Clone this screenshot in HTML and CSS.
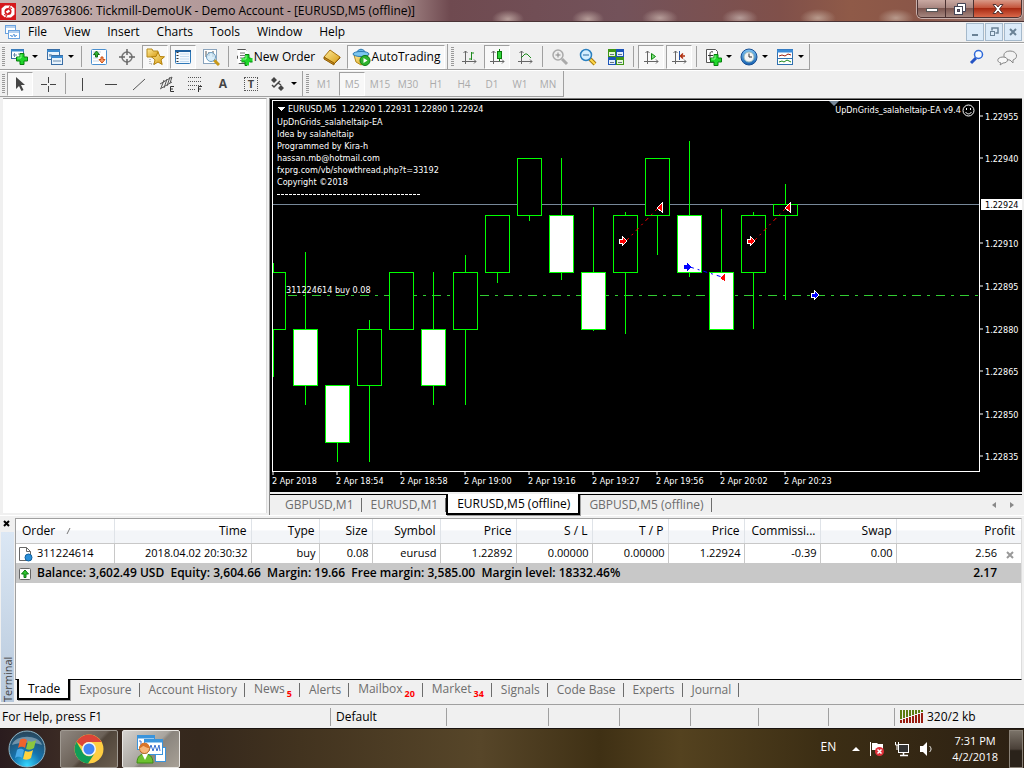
FILE: index.html
```html
<!DOCTYPE html>
<html lang="en">
<head>
    <meta charset="UTF-8">
    <meta name="viewport" content="width=device-width, initial-scale=1.0">
    <title>2089763806: Tickmill-DemoUK - Demo Account - [EURUSD,M5 (offline)]</title>
    <link rel="stylesheet" href="styles.css">
</head>
<body>

<!-- shared icon parts -->
<svg class="defs" aria-hidden="true">
    <defs>
        <linearGradient id="gold" x1="0" y1="0" x2="1" y2="1"><stop offset="0" stop-color="#ffec9a"/><stop offset="1" stop-color="#d69a10"/></linearGradient>
        <linearGradient id="blue" x1="0" y1="0" x2="0" y2="1"><stop offset="0" stop-color="#7fc4f5"/><stop offset="1" stop-color="#1560b0"/></linearGradient>
        <radialGradient id="orb" cx=".5" cy=".95" r=".9"><stop offset="0" stop-color="#35d8ff"/><stop offset=".45" stop-color="#1573ae"/><stop offset="1" stop-color="#28485e"/></radialGradient>
        <symbol id="plus" viewBox="0 0 12 12"><path d="M4 .5h4V4h3.500v4H8v3.500H4V8H.5V4H4z" fill="#1fd62a" stroke="#07800e"/><path d="M5 1.500v3.500H1.500" fill="none" stroke="#8dff8d"/></symbol>
        <symbol id="axes" viewBox="0 0 18 18"><path d="M5.500 3v13M2 13.500h14M3.500 5l2-2 2 2M14 11.500l2 2-2 2" fill="none" stroke="#666"/></symbol>
        <symbol id="lens" viewBox="0 0 18 18"><path d="M11 11l5 5" stroke="#a87a10" stroke-width="4"/><path d="M11 11l5 5" stroke="#ffd84a" stroke-width="2"/><circle cx="7" cy="7" r="5.500" fill="#d4efff" stroke="#2b80c0" stroke-width="1.500"/></symbol>
    </defs>
</svg>

<header class="titlebar">
    <svg class="app-logo" width="16" height="17" viewBox="0 0 16 17"><rect width="16" height="17" fill="#d5181c"/><path d="M5 2.500h6l3.500 3v6l-3.500 3H5l-3.500-3v-6z" fill="#fff"/><circle cx="8" cy="8.500" r="3.500" fill="#d5181c"/><path d="M6.500 9.500l3-2" stroke="#fff" stroke-width="2.500"/><path d="M11 2l-2 2.500 3 1M5 15l2-2.500-3-1" fill="none" stroke="#d5181c"/></svg>
    <h1 class="title">2089763806: Tickmill-DemoUK - Demo Account - [EURUSD,M5 (offline)]</h1>
    <div class="win-buttons">
        <button class="win-btn" aria-label="Minimize"><svg width="12" height="12"><rect x=".5" y="5.500" width="11" height="3" fill="#fff" stroke="#555"/></svg></button>
        <button class="win-btn" aria-label="Restore"><svg width="12" height="12"><path d="M3.500 3.500v-3h8v8h-3" fill="#fff" stroke="#445"/><rect x=".5" y="3.500" width="8" height="8" fill="#fff" stroke="#445"/><rect x="3.500" y="6.500" width="2" height="2" fill="#867" stroke="#445"/></svg></button>
        <button class="win-btn win-close" aria-label="Close"><svg width="12" height="12"><path d="M1 1.500h3l2 2.500 2-2.500h3L7.500 6l3.500 4.500H8L6 8l-2 2.500H1L4.500 6z" fill="#fff" stroke="#533"/></svg></button>
    </div>
</header>

<nav class="menubar">
    <svg width="15" height="15" viewBox="0 0 15 15"><g fill="#fff" stroke="#6aa2de"><rect x=".5" y=".5" width="10" height="8"/><path d="M1 2h9" /><rect x="3.500" y="5.500" width="11" height="8"/><path d="M4 7h10"/><path d="M5 11l1-1 1 2 2-3 1 3 1-2 1 1" fill="none"/></g></svg>
    <a href="#">File</a>
    <a href="#">View</a>
    <a href="#">Insert</a>
    <a href="#">Charts</a>
    <a href="#">Tools</a>
    <a href="#">Window</a>
    <a href="#">Help</a>
    <div class="mdi-buttons">
        <button class="mdi-btn" aria-label="Minimize chart"><svg width="10" height="10"><path d="M2 8h6" stroke="#6a8296" stroke-width="2"/></svg></button>
        <button class="mdi-btn" aria-label="Restore chart"><svg width="10" height="10"><path d="M3 3.500V1h6v5H6.500" fill="none" stroke="#6a8296" stroke-width="1.500"/><rect x="1.500" y="4.500" width="4" height="4" fill="none" stroke="#6a8296"/></svg></button>
        <button class="mdi-btn" aria-label="Close chart"><svg width="10" height="10"><path d="M2 2l6 6M8 2L2 8" stroke="#6a8296" stroke-width="2"/></svg></button>
    </div>
</nav>

<div class="toolbar">
    <div class="band">
        <span class="grip"></span>
        <button class="tool split" aria-label="New chart"><svg width="18" height="18"><rect x="1.500" y="1.500" width="12" height="9" fill="#fff" stroke="#3a6ea5"/><path d="M1 2.500h13" stroke="#3a8ad0" stroke-width="2"/><path d="M4.500 5v4M3 7h4M8 6h4" stroke="#6b8cae"/><use href="#plus" x="6" y="5" width="12" height="12"/></svg><i class="arrow"></i></button>
        <button class="tool split" aria-label="Profiles"><svg width="18" height="18"><g fill="#e8f3fc" stroke="#3a6ea5"><rect x="1.500" y="1.500" width="12" height="10"/><path d="M1 3h13" stroke="#3a8ad0" stroke-width="2"/><rect x="5.500" y="7.500" width="11" height="9"/><path d="M5 9h12" stroke="#3a8ad0" stroke-width="2"/></g><path d="M4 6v3M3 7h3M7 13h8" stroke="#6b8cae"/></svg><i class="arrow"></i></button>
        <span class="sep"></span>
        <button class="tool" aria-label="Market Watch"><svg width="18" height="18"><rect x="1.500" y="1.500" width="15" height="15" rx="1" fill="#fff" stroke="#4a90d0"/><path d="M3 4h8M3 7h5M3 10h5M3 13h6" stroke="#c5d5e5"/><path d="M6.500 3l3 3.500h-2V9h-2V6.500h-2z" fill="#2fb32f" stroke="#167016"/><path d="M12 15l-3-3.500h2V9h2v2.500h2z" fill="#f8a070" stroke="#d05010"/></svg></button>
        <button class="tool" aria-label="Data Window"><svg width="18" height="18"><circle cx="9" cy="9" r="5" fill="none" stroke="#777" stroke-width="1.500"/><path d="M9 1v6M9 11v6M1 9h6M11 9h6" stroke="#666" stroke-width="1.500"/></svg></button>
        <button class="tool active" aria-label="Navigator"><svg width="20" height="20"><path d="M2 4V2h5l1 2h5v6H2z" fill="url(#gold)" stroke="#b58a1a"/><path d="M5 12v6M6 17h4" stroke="#888" stroke-dasharray="1 1"/><path d="M13 5l2 4.500 4.500.3-3.500 3 1.200 4.700-4.200-2.500L9 17.500l1-4.700-3.500-3 4.500-.3z" fill="url(#gold)" stroke="#b5820a"/></svg></button>
        <button class="tool active" aria-label="Terminal"><svg width="18" height="18"><rect x="1.500" y="2.500" width="15" height="13" rx="1" fill="#f2f8fd" stroke="#2f78b8"/><path d="M1 3h16" stroke="#1d5f9e" stroke-width="2"/><path d="M3.500 4v11" stroke="#333" stroke-width="2" stroke-dasharray="1 2"/><path d="M6 6h9M6 8.500h9M6 11h9M6 13.500h9" stroke="#c4dbef"/></svg></button>
        <button class="tool" aria-label="Strategy Tester"><svg width="18" height="18"><rect x="1.500" y="1.500" width="13" height="14" fill="#fff" stroke="#8aa4bd"/><path d="M4 3v6M7 4v4M11 3v6" stroke="#555"/><path d="M12 12l5 5" stroke="#c89818" stroke-width="3"/><circle cx="9" cy="9" r="4.500" fill="#cfe8f8" fill-opacity=".8" stroke="#6a9cc0"/></svg></button>
        <span class="sep"></span>
        <button class="tool order"><svg width="18" height="18"><path d="M2.500 1.500h8l3 3v11h-11z" fill="#fff" stroke="#555"/><path d="M5 5h5M5 7.500h6M5 10h4M5 12.500h3" stroke="#777"/><use href="#plus" x="6" y="6" width="12" height="12"/></svg>New Order</button>
        <button class="tool" aria-label="MetaEditor"><svg width="18" height="18"><path d="M1 9l6-7 10 7-6 7z" fill="url(#gold)" stroke="#a8720c"/><path d="M1 9v2l10 6v-2zM11 16l6-6V9" fill="#c68a18" stroke="#8f5f08"/></svg></button>
        <button class="tool auto active"><svg width="19" height="18"><path d="M2 7h14l-2 7-5 3-5-3z" fill="url(#gold)" stroke="#b58a1a"/><path d="M5 5c0-5 8-5 8 0" fill="#6ab8e8" stroke="#2a78b0"/><ellipse cx="9" cy="6" rx="8" ry="2.500" fill="#7cc6ef" stroke="#2a78b0"/><circle cx="13" cy="12.500" r="5" fill="#2fb32f" stroke="#0b7a14"/><path d="M11.500 10l4 2.500-4 2.500z" fill="#fff"/></svg>AutoTrading</button>
    </div>
    <div class="band">
        <span class="grip"></span>
        <button class="tool" aria-label="Bar chart"><svg width="18" height="18"><use href="#axes" width="18" height="18"/><path d="M11.500 4v8M9 11h2.500M11.500 5H14" stroke="#1c8a1c"/></svg></button>
        <button class="tool active" aria-label="Candlesticks"><svg width="18" height="18"><use href="#axes" width="18" height="18"/><path d="M11.500 1v12" stroke="#0a7a0a"/><rect x="9.500" y="3.500" width="4" height="7" fill="#2fd23a" stroke="#0a7a0a"/></svg></button>
        <button class="tool" aria-label="Line chart"><svg width="18" height="18"><use href="#axes" width="18" height="18"/><path d="M5 10l4-4h2l4 4" fill="none" stroke="#1c8a1c"/></svg></button>
        <span class="sep"></span>
        <button class="tool" aria-label="Zoom In"><svg width="18" height="18"><path d="M11 11l5 5" stroke="#aaa" stroke-width="3"/><circle cx="7" cy="7" r="5" fill="#eee" stroke="#aaa" stroke-width="1.500"/><path d="M4.500 7h5M7 4.500v5" stroke="#888"/></svg></button>
        <button class="tool" aria-label="Zoom Out"><svg width="18" height="18"><use href="#lens" width="18" height="18"/><path d="M4 7h6" stroke="#2b6aa0"/></svg></button>
        <button class="tool" aria-label="Tile Windows"><svg width="18" height="18"><g stroke-width="1"><rect x="1.500" y="1.500" width="7" height="7" fill="#e8f8dc" stroke="#3f9616"/><rect x="9.500" y="1.500" width="7" height="7" fill="#e3eefc" stroke="#1c54b8"/><rect x="1.500" y="9.500" width="7" height="7" fill="#e3eefc" stroke="#1c54b8"/><rect x="9.500" y="9.500" width="7" height="7" fill="#e8f8dc" stroke="#3f9616"/></g><path d="M1 2.500h8M9 10.500h8" stroke="#3f9616" stroke-width="3"/><path d="M9 2.500h8M1 10.500h8" stroke="#1c54b8" stroke-width="3"/><path d="M3 6.500h4M11 6.500h4M3 14.500h4M11 14.500h4" stroke="#678"/></svg></button>
        <span class="sep"></span>
        <button class="tool active" aria-label="Auto Scroll"><svg width="18" height="18"><use href="#axes" width="18" height="18"/><path d="M9.500 5.500l4 3-4 3z" fill="#7fe07f" stroke="#0f8a0f"/></svg></button>
        <button class="tool active" aria-label="Chart Shift"><svg width="18" height="18"><use href="#axes" width="18" height="18"/><path d="M9.500 3v9" stroke="#2255aa"/><path d="M15 8h-4M13 5.500L10.500 8l2.500 2.500" stroke="#b03010" fill="none" stroke-width="1.500"/></svg></button>
        <span class="sep"></span>
        <button class="tool split" aria-label="Indicators"><svg width="18" height="18"><path d="M2.500 1.500h9l2 2v11h-11z" fill="#fff" stroke="#555"/><path d="M9 4c-3-1-3 1-3 3v5M4 7.500h5" fill="none" stroke="#333"/><use href="#plus" x="6" y="6" width="12" height="12"/></svg><i class="arrow"></i></button>
        <button class="tool split" aria-label="Periods"><svg width="18" height="18"><circle cx="9" cy="9" r="8" fill="url(#blue)" stroke="#174f94"/><circle cx="9" cy="9" r="5" fill="#f5f5f5" stroke="#9bb"/><path d="M9 5.500V9h3" fill="none" stroke="#333"/></svg><i class="arrow"></i></button>
        <button class="tool split" aria-label="Templates"><svg width="18" height="18"><rect x="1.500" y="1.500" width="15" height="15" fill="#fff" stroke="#2f6faf"/><path d="M1 3h16" stroke="#3b8bd8" stroke-width="3"/><path d="M2 10.500h14" stroke="#2f6faf"/><path d="M3 8l3-1 3 1 3-2 3 1" fill="none" stroke="#a02010"/><path d="M3 14l3-1 2 1 3-2 4 2" fill="none" stroke="#1c8a1c"/></svg><i class="arrow"></i></button>
    </div>
    <div class="corner">
        <button class="tool" aria-label="Search"><svg width="18" height="18"><path d="M3 15l5-5" stroke="#2453c4" stroke-width="3"/><circle cx="10.500" cy="6.500" r="4" fill="#f4f9ff" stroke="#2d68d8" stroke-width="1.500"/></svg></button>
        <button class="tool" aria-label="Community"><svg width="22" height="18"><path d="M14 12l3 3v-3c6-2 4-9-3-9-8 0-8 8-1 9z" fill="#f2f2f2" stroke="#888"/><path d="M5 15l-1 2 3-2c6 0 6-6 0-6s-7 5-2 6z" fill="#f8f8f8" stroke="#888"/></svg></button>
    </div>
</div>

<div class="toolbar">
    <div class="band">
        <span class="grip"></span>
        <button class="tool active" aria-label="Cursor"><svg width="18" height="18"><path d="M5 2v12l3-3 2.500 5 2-1L10 10h4z" fill="#444"/></svg></button>
        <button class="tool" aria-label="Crosshair"><svg width="18" height="18"><path d="M9.500 2v6M9.500 11v6M2 9.500h6M11 9.500h6" stroke="#444"/></svg></button>
        <span class="sep"></span>
        <button class="tool" aria-label="Vertical line"><svg width="18" height="18"><path d="M8.500 3v13" stroke="#444"/></svg></button>
        <button class="tool" aria-label="Horizontal line"><svg width="18" height="18"><path d="M3 9.500h12" stroke="#444"/></svg></button>
        <button class="tool" aria-label="Trendline"><svg width="18" height="18"><path d="M3 15L15 4" stroke="#555"/></svg></button>
        <button class="tool" aria-label="Equidistant channel"><svg width="18" height="18"><path d="M2 9l12-7M2 14l12-7M3 13l3-8M6 13l3-9M9 11l3-9M12 8l2-6" stroke="#555"/><path d="M16 11.500h-3.500v5H16M12.500 14H15" fill="none" stroke="#333"/></svg></button>
        <button class="tool" aria-label="Fibonacci"><svg width="18" height="18"><path d="M2 2.500h13M2 6.500h13M2 10.500h13M2 14.500h8" stroke="#555" stroke-dasharray="1 1"/><path d="M16 11.500h-3.500V17M12.500 14H15" fill="none" stroke="#333"/></svg></button>
        <button class="tool glyph" aria-label="Text">A</button>
        <button class="tool glyph" aria-label="Text label"><span class="boxed">T</span></button>
        <button class="tool split" aria-label="Arrows"><svg width="18" height="18"><path d="M2 5l3-3 3 3-3 3zM9 13l3-3 3 3-3 3z" fill="#444"/><path d="M3 10l2 2 6-6M9 8l3 2" fill="none" stroke="#444" stroke-width="1.500"/></svg><i class="arrow"></i></button>
    </div>
    <div class="band periods">
        <span class="grip"></span>
        <button class="tool">M1</button>
        <button class="tool active">M5</button>
        <button class="tool">M15</button>
        <button class="tool">M30</button>
        <button class="tool">H1</button>
        <button class="tool">H4</button>
        <button class="tool">D1</button>
        <button class="tool">W1</button>
        <button class="tool">MN</button>
    </div>
</div>

<main class="workspace">
    <aside class="side-panel"></aside>
    <section class="chart-window">
        <div class="chart">
            <div class="plot">
                <svg class="plot-svg" width="100%" height="370">
                    <line class="bid" x1="0" y1="103" x2="100%" y2="103"/>
                    <line class="order" x1="15" y1="194" x2="100%" y2="194"/>
                    <g class="candles">
                        <path d="M0 162v114M32 151v153M64 285v76M96 219v142M160 171v133M192 154v150M224 172v10M256 115v5M288 57v122M320 106v124M352 111v122M384 115v39M416 40v136M448 108v121M480 111v117M512 83v116"/>
                        <rect x="-12" y="171" width="24" height="57"/>
                        <rect class="down" x="20" y="228" width="24" height="56"/>
                        <rect class="down" x="52" y="284" width="24" height="57"/>
                        <rect x="84" y="228" width="24" height="56"/>
                        <rect x="116" y="171" width="24" height="57"/>
                        <rect class="down" x="148" y="228" width="24" height="56"/>
                        <rect x="180" y="171" width="24" height="57"/>
                        <rect x="212" y="114" width="24" height="57"/>
                        <rect x="244" y="57" width="24" height="57"/>
                        <rect class="down" x="276" y="114" width="24" height="57"/>
                        <rect class="down" x="308" y="171" width="24" height="57"/>
                        <rect x="340" y="114" width="24" height="57"/>
                        <rect x="372" y="57" width="24" height="57"/>
                        <rect class="down" x="404" y="114" width="24" height="57"/>
                        <rect class="down" x="436" y="171" width="24" height="57"/>
                        <rect x="468" y="114" width="24" height="57"/>
                        <rect x="500" y="103" width="24" height="11"/>
                    </g>
                    <g class="trades">
                        <path d="M353 140L385 107M481 140L513 107" stroke="#f00"/>
                        <path d="M417 166L449 176" stroke="#00f"/>
                    </g>
                    <g stroke="#fff">
                        <path d="M346 138h3v-3l5 5-5 5v-3h-3zM474 138h3v-3l5 5-5 5v-3h-3z" fill="#f00"/>
                        <path d="M389 102v9l-5-4zM517 102v9l-5-4z" fill="#f00"/>
                        <path d="M538 192h3v-3l5 5-5 5v-3h-3z" fill="#00f"/>
                    </g>
                    <path d="M411 164h3v-2l5 4-5 4v-2h-3z" fill="#00f"/>
                    <path d="M452 173v7l-5-3z" fill="#f00"/>
                    <path d="M4 6h8l-4 4z" fill="#fff"/>
                    <g class="chart-text">
                        <text x="15" y="11">EURUSD,M5&#160; 1.22920 1.22931 1.22890 1.22924</text>
                        <text x="4" y="24">UpDnGrids_salaheltaip-EA</text>
                        <text x="4" y="36">Idea by salaheltaip</text>
                        <text x="4" y="48">Programmed by Kira-h</text>
                        <text x="4" y="60">hassan.mb@hotmail.com</text>
                        <text x="4" y="72">fxprg.com/vb/showthread.php?t=33192</text>
                        <text x="4" y="84">Copyright ©2018</text>
                        <text x="13" y="192">311224614 buy 0.08</text>
                    </g>
                    <path d="M4 93h144" stroke="#fff" stroke-dasharray="3 1"/>
                </svg>
                <div class="expert"><i class="shift-mark"></i>UpDnGrids_salaheltaip-EA v9.4<svg width="13" height="13"><circle cx="6.500" cy="6.500" r="5.500" fill="none" stroke="#fff"/><path d="M4.500 4v2M8.500 4v2M3.500 8c1.500 2.500 4.500 2.500 6 0" stroke="#fff" fill="none"/></svg></div>
            </div>
            <svg class="price-axis chart-text" width="42" height="372">
                <path d="M0 16h3M0 58h3M0 143h3M0 186h3M0 229h3M0 271h3M0 314h3M0 356h3" stroke="#fff"/>
                <rect x="1" y="99" width="41" height="11" fill="#fff"/>
                <text x="5" y="20">1.22955</text>
                <text x="5" y="62">1.22940</text>
                <text class="now" x="5" y="108">1.22924</text>
                <text x="5" y="147">1.22910</text>
                <text x="5" y="190">1.22895</text>
                <text x="5" y="233">1.22880</text>
                <text x="5" y="275">1.22865</text>
                <text x="5" y="318">1.22850</text>
                <text x="5" y="360">1.22835</text>
            </svg>
            <svg class="time-axis chart-text" width="100%" height="19">
                <path d="M1 0v3M65 0v3M129 0v3M193 0v3M257 0v3M321 0v3M385 0v3M449 0v3M513 0v3" stroke="#fff"/>
                <text x="0" y="12">2 Apr 2018</text>
                <text x="64" y="12">2 Apr 18:54</text>
                <text x="128" y="12">2 Apr 18:58</text>
                <text x="192" y="12">2 Apr 19:00</text>
                <text x="256" y="12">2 Apr 19:16</text>
                <text x="320" y="12">2 Apr 19:27</text>
                <text x="384" y="12">2 Apr 19:56</text>
                <text x="448" y="12">2 Apr 20:02</text>
                <text x="512" y="12">2 Apr 20:23</text>
            </svg>
        </div>
        <div class="tabs chart-tabs">
            <button class="tab">GBPUSD,M1</button>
            <button class="tab">EURUSD,M1</button>
            <button class="tab current">EURUSD,M5 (offline)</button>
            <button class="tab">GBPUSD,M5 (offline)</button>
            <div class="tab-scroll">
                <button aria-label="Scroll left"><svg width="6" height="8"><path d="M5 1v6L1 4z" fill="#888"/></svg></button>
                <button aria-label="Scroll right"><svg width="6" height="8"><path d="M1 1v6l4-3z" fill="#888"/></svg></button>
            </div>
        </div>
    </section>
</main>

<section class="terminal">
    <div class="terminal-side">
        <button class="side-close" aria-label="Close terminal"><svg width="8" height="8"><path d="M1 1l5 5M6 1L1 6" stroke="#000" stroke-width="2"/></svg></button>
        <div class="side-title">Terminal</div>
    </div>
    <div class="terminal-main">
        <div class="trades-list">
            <table class="orders">
                <colgroup>
                    <col class="c-order"><col class="c-time"><col class="c-type"><col class="c-size"><col class="c-symbol">
                    <col class="c-num"><col class="c-num"><col class="c-num"><col class="c-num"><col class="c-num"><col class="c-num"><col>
                </colgroup>
                <thead>
                    <tr>
                        <th class="first">Order <svg class="sort" width="10" height="8"><path d="M1 7L4 1" stroke="#777"/></svg></th>
                        <th>Time</th>
                        <th>Type</th>
                        <th>Size</th>
                        <th>Symbol</th>
                        <th>Price</th>
                        <th>S / L</th>
                        <th>T / P</th>
                        <th>Price</th>
                        <th>Commissi...</th>
                        <th>Swap</th>
                        <th>Profit</th>
                    </tr>
                </thead>
                <tbody>
                    <tr>
                        <td class="first"><svg class="row-icon" width="15" height="16"><path d="M1.500 1.500h7l4 4v9h-11z" fill="#fff" stroke="#666"/><path d="M8.500 1.500v4h4" fill="none" stroke="#666"/><circle cx="10.500" cy="11.500" r="3.500" fill="#2a8fd8" stroke="#0f5f9e"/></svg>311224614</td>
                        <td>2018.04.02 20:30:32</td>
                        <td>buy</td>
                        <td>0.08</td>
                        <td>eurusd</td>
                        <td>1.22892</td>
                        <td>0.00000</td>
                        <td>0.00000</td>
                        <td>1.22924</td>
                        <td>-0.39</td>
                        <td>0.00</td>
                        <td class="profit">2.56<button class="close-order" aria-label="Close order"><svg width="8" height="8"><path d="M1 1l6 6M7 1L1 7" stroke="#999" stroke-width="2"/></svg></button></td>
                    </tr>
                    <tr class="balance">
                        <td class="first" colspan="11"><svg class="row-icon" width="15" height="14"><rect x="1.500" y="1.500" width="11" height="11" rx="1" fill="#fff" stroke="#666"/><path d="M7 3l3.500 4H8v3.500H6V7H3.500z" fill="#2fc42f" stroke="#0b7a14"/></svg>Balance: 3,602.49 USD&#160; Equity: 3,604.66&#160; Margin: 19.66&#160; Free margin: 3,585.00&#160; Margin level: 18332.46%</td>
                        <td class="profit">2.17</td>
                    </tr>
                </tbody>
            </table>
        </div>
        <div class="tabs terminal-tabs">
            <button class="tab current">Trade</button>
            <button class="tab">Exposure</button>
            <button class="tab">Account History</button>
            <button class="tab">News<span class="count">5</span></button>
            <button class="tab">Alerts</button>
            <button class="tab">Mailbox<span class="count">20</span></button>
            <button class="tab">Market<span class="count">34</span></button>
            <button class="tab">Signals</button>
            <button class="tab">Code Base</button>
            <button class="tab">Experts</button>
            <button class="tab">Journal</button>
        </div>
    </div>
</section>

<footer class="statusbar">
    <span class="help">For Help, press F1</span>
    <span>Default</span>
    <span></span>
    <span></span>
    <span></span>
    <span></span>
    <span></span>
    <span></span>
    <span class="traffic"><svg width="24" height="14"><path d="M1 0v9M4 0v8M7 0v7M10 0v6M13 0v5M16 0v4M19 0v3M22 0v2" stroke="#5b7a10" stroke-width="2"/><path d="M1 10v3M4 9v4M7 8v5M10 7v6M13 6v7M16 5v8M19 4v9M22 3v10" stroke="#9a1c10" stroke-width="2"/></svg>320/2 kb</span>
</footer>

<div class="taskbar">
    <button class="start" aria-label="Start"><svg width="38" height="38"><circle cx="19" cy="19" r="18" fill="url(#orb)" stroke="#8fb7c9"/><path d="M4 15C7 4 31 4 34 15c-8-3-22-3-30 0z" fill="#fff" opacity=".35"/><path d="M12 10c3-2 5-1 7 0l-2 8c-3-2-5-1-7 0z" fill="#f0622c"/><path d="M20 11c3 1 5 1 8-1l-2 8c-3 2-5 2-8 1z" fill="#8cc63e"/><path d="M9 20c3-2 5-1 7 0l-2 8c-3-2-5-1-7 0z" fill="#48a9e8"/><path d="M17 21c3 1 5 1 8-1l-2 8c-3 2-5 2-8 1z" fill="#ffd23e"/></svg></button>
    <button class="task" aria-label="Google Chrome"><svg width="30" height="30"><circle cx="15" cy="15" r="14.500" fill="#ffce42"/><path d="M2.500 7.700A14.500 14.500 0 0 1 27.600 8H15a7 7 0 0 0-6.500 4.500z" fill="#dc4437"/><path d="M2.500 7.700A14.500 14.500 0 0 0 14 29.500L20.500 19.500a7 7 0 0 1-12-1.500z" fill="#109d58"/><circle cx="15" cy="15" r="7" fill="#f5f5f5"/><circle cx="15" cy="15" r="5.500" fill="#4385f4"/></svg></button>
    <button class="task open" aria-label="MetaTrader"><svg width="32" height="32"><g fill="#fff" stroke="#3a94dc"><rect x="2.500" y="2.500" width="17" height="14"/><path d="M2 4h18" stroke-width="3"/><rect x="20.500" y="14.500" width="10" height="14"/><rect x="9.500" y="6.500" width="18" height="15"/><path d="M9 8h19" stroke-width="3"/></g><path d="M4 8h2v5M14 18l2-6 2 6 2-6 2 6 2-6 1 6" fill="none" stroke="#3a70d0"/><path d="M2 30c0-7 4-9 8-9s8 2 8 9z" fill="#6cc030" stroke="#3f8d12"/><path d="M7 21l3 6 3-6z" fill="#fff"/><circle cx="9.500" cy="15.500" r="5" fill="#f6b67a" stroke="#c06a20"/><path d="M4.500 15c0-7 10-7 10 0-4 0-5-2-6-2s-2 2-4 2z" fill="#d8742a"/></svg></button>
    <div class="tray">
        <span class="lang">EN</span>
        <button aria-label="Show hidden icons"><svg width="8" height="6"><path d="M0 5l4-4 4 4z" fill="#fff"/></svg></button>
        <button aria-label="Action Center"><svg width="16" height="16"><path d="M1.500 1v14" stroke="#fff"/><path d="M3 2h5l1 1h5v6H3z" fill="#fff"/><circle cx="10.500" cy="10.500" r="4.500" fill="#e0303a"/><path d="M8.500 8.500l4 4M12.500 8.500l-4 4" stroke="#fff" stroke-width="1.500"/></svg></button>
        <button aria-label="Network"><svg width="16" height="16"><rect x="4.500" y="3.500" width="10" height="8" fill="#333" stroke="#fff"/><path d="M6 14.500h8M9.500 12v2" stroke="#fff" stroke-width="1.500"/><path d="M1.500 1v3h3V1M3 4v5" stroke="#fff" fill="none"/></svg></button>
        <button aria-label="Volume"><svg width="14" height="16"><path d="M1 5h3l4-4v14l-4-4H1z" fill="#fff"/><path d="M10.500 5c2 2 2 4 0 6" stroke="#fff" fill="none"/></svg></button>
        <div class="clock"><span>7:31 PM</span><span>4/2/2018</span></div>
        <button class="show-desktop" aria-label="Show desktop"></button>
    </div>
</div>

</body>
</html>
```
FILE: styles.css
```css
* {
    box-sizing: border-box;
}
body {
    margin: 0;
    background: #fff;
    color: #000;
    font-family: "Open Sans", "Noto Sans", sans-serif;
    font-size: 12px;
    line-height: 16px;
}
button {
    margin: 0;
    padding: 0;
    border: 0;
    background: none;
    color: inherit;
    font: inherit;
}
svg {
    display: block;
    flex: none;
}
.defs {
    position: absolute;
    width: 0;
    height: 0;
}

/* title bar */
.titlebar {
    display: flex;
    height: 22px;
    border-bottom: 1px solid #4a3335;
    background:
        radial-gradient(ellipse 16px 9px at 508px 19px, #b59c98, transparent),
        radial-gradient(ellipse 16px 9px at 588px 19px, #b59c98, transparent),
        radial-gradient(ellipse 18px 9px at 660px 18px, #b59c98, transparent),
        radial-gradient(ellipse 18px 9px at 740px 18px, #b59c98, transparent),
        radial-gradient(ellipse 18px 9px at 818px 18px, #b89a8c, transparent),
        radial-gradient(ellipse 18px 9px at 896px 18px, #b89a8c, transparent),
        linear-gradient(to right, #c9b4b2 0, #b39a9a 200px, #a58888 400px, #6f4a50 450px, #73525a 620px, #80504a 780px, #8f5a48 850px, #8a5648 920px, #a08078 100%);
}
.app-logo {
    margin-top: 3px;
}
.title {
    flex: 1;
    margin: 0;
    padding: 3px 5px;
    font-size: 12px;
    font-weight: normal;
    line-height: 16px;
}
.win-buttons {
    display: flex;
    height: 18px;
    margin-right: 2px;
    border: 1px solid #4b3232;
    border-top: 0;
    border-radius: 0 0 5px 5px;
    overflow: hidden;
    box-shadow: 0 0 0 1px #c8b0ac;
}
.win-btn {
    display: flex;
    width: 28px;
    align-items: center;
    justify-content: center;
    border-right: 1px solid #4b3232;
    background: linear-gradient(#c9a9a2 0, #a98680 45%, #7c5650 50%, #a5877f 100%);
}
.win-close {
    width: 47px;
    border-right: 0;
    background: linear-gradient(#d99a88 0, #c4553c 45%, #a82a12 50%, #d9684a 100%);
}

/* menu */
.menubar {
    display: flex;
    align-items: center;
    height: 21px;
    padding: 0 2px 0 5px;
    border-bottom: 1px solid #a0a0a0;
    background: #f0f0f0;
}
.menubar a {
    margin-left: 17px;
    color: #000;
    text-decoration: none;
}
.menubar a:first-of-type {
    margin-left: 8px;
}
.mdi-buttons {
    display: flex;
    gap: 1px;
    margin-left: auto;
}
.mdi-btn {
    display: flex;
    width: 18px;
    height: 18px;
    align-items: center;
    justify-content: center;
    border: 1px solid #a5b9cb;
    background: #dcebf9;
}

/* toolbars */
.toolbar {
    display: flex;
    height: 27px;
    border-top: 1px solid #fff;
    background: #f0f0f0;
}
.band {
    display: flex;
    gap: 2px;
    align-items: center;
    padding: 0 2px;
    border-right: 1px solid #a0a0a0;
    border-bottom: 1px solid #a0a0a0;
}
.band + .band {
    padding-left: 3px;
}
.grip {
    width: 3px;
    height: 19px;
    background: repeating-linear-gradient(#999 0, #999 1px, #f0f0f0 1px, #f0f0f0 2px);
}
.tool {
    display: flex;
    align-items: center;
    justify-content: center;
    width: 26px;
    height: 24px;
}
.tool.active {
    border: 1px solid #a0a0a0;
    border-right-color: #fff;
    border-bottom-color: #fff;
    background: #f8f8f8;
}
.tool.split {
    width: 34px;
    gap: 4px;
}
.tool.order {
    width: 84px;
    gap: 1px;
}
.tool.auto {
    width: 98px;
    gap: 1px;
}
.tool.glyph {
    color: #444;
    font-weight: bold;
}
.boxed {
    width: 14px;
    border: 1px dotted #555;
    font-size: 11px;
    line-height: 12px;
}
.arrow {
    border: 3px solid transparent;
    border-top-color: #000;
    border-bottom: 0;
}
.sep {
    width: 5px;
    height: 21px;
    background: linear-gradient(to right, transparent 2px, #a0a0a0 2px, #a0a0a0 3px, transparent 3px);
}
.corner {
    display: flex;
    gap: 4px;
    align-items: center;
    margin-left: auto;
    padding-right: 4px;
}
.periods {
    color: #aaa;
    font-size: 10px;
}

/* chart area */
.workspace {
    display: flex;
    padding: 1px 2px 0 3px;
    background: #f0f0f0;
}
.side-panel {
    width: 264px;
    margin-bottom: 2px;
    border-top: 1px solid #a0a0a0;
    border-right: 1px solid #ddd;
    background: #fff;
}
.chart-window {
    flex: 1;
    margin-left: 2px;
    border-left: 1px solid #888;
}
.chart {
    display: grid;
    grid-template-columns: 1fr 42px;
    padding: 1px 0 1px 2px;
    border-top: 1px solid #777;
    background: #000;
}
.plot {
    position: relative;
    border: 1px solid #fff;
}
.plot-svg {
    shape-rendering: crispEdges;
}
.bid {
    stroke: #778899;
}
.order {
    stroke: #32cd32;
    stroke-dasharray: 9 6 3 6;
}
.candles {
    fill: #000;
    stroke: #0f0;
}
.candles .down {
    fill: #fff;
}
.trades {
    fill: none;
    stroke-dasharray: 4 4 2 4;
    shape-rendering: auto;
}
.chart-text {
    fill: #fff;
    font-family: "DejaVu Sans Condensed", "DejaVu Sans", sans-serif;
    font-size: 9px;
}
.now {
    fill: #000;
}
.expert {
    position: absolute;
    top: 0;
    right: 4px;
    display: flex;
    align-items: center;
    gap: 1px;
    color: #fff;
    font: 9px/18px "DejaVu Sans Condensed", "DejaVu Sans", sans-serif;
}
.shift-mark {
    align-self: flex-start;
    margin-right: -5px;
    border: 5px solid transparent;
    border-top-color: #778899;
    border-bottom: 0;
}
.time-axis {
    grid-column: 1 / -1;
}

/* tabs */
.tabs {
    display: flex;
    align-items: flex-start;
    height: 22px;
    color: #6d6d6d;
}
.tab {
    position: relative;
    height: 19px;
    padding: 0 8px 0 9px;
    white-space: nowrap;
}
.tab::after {
    content: "";
    position: absolute;
    top: 3px;
    right: 0;
    height: 14px;
    border-right: 1px solid #6d6d6d;
}
.tab.current {
    margin-top: -1px;
    height: 21px;
    border: 0 solid #000;
    border-width: 0 2px 2px;
    background: #fff;
    color: #000;
    box-shadow: 1px 1px 0 #a0a0a0;
}
.tab.current::after {
    border: 0;
}
.chart-tabs {
    height: 21px;
    margin-top: 2px;
    padding-left: 6px;
    border-top: 1px solid #000;
}
.tab-scroll {
    display: flex;
    gap: 12px;
    align-self: center;
    margin-left: auto;
    padding-right: 7px;
}
.count {
    position: relative;
    top: 4px;
    margin-left: 2px;
    color: #f00;
    font-size: 9px;
    font-weight: bold;
}

/* terminal */
.terminal {
    display: flex;
    padding: 2px 2px 2px 0;
    border-top: 1px solid #fff;
    background: #f0f0f0;
}
.terminal-side {
    display: flex;
    flex-direction: column;
    width: 15px;
    padding-left: 1px;
}
.side-close {
    padding: 2px 2px 4px;
}
.side-title {
    flex: 1;
    width: 13px;
    padding-bottom: 3px;
    background: linear-gradient(#b8c9dc, #dbe7f4);
    color: #444;
    font-size: 11px;
    line-height: 13px;
    writing-mode: vertical-rl;
    transform: rotate(180deg);
}
.terminal-main {
    flex: 1;
    min-width: 0;
}
.trades-list {
    min-height: 162px;
    border: 1px solid #a0a0a0;
    border-right-color: #ddd;
    border-bottom-color: #000;
    background: #fff;
}
.orders {
    width: 100%;
    table-layout: fixed;
    border-collapse: collapse;
}
.c-order { width: 98px; }
.c-time { width: 137px; }
.c-type { width: 68px; }
.c-size { width: 53px; }
.c-symbol { width: 68px; }
.c-num { width: 76px; }
.orders th,
.orders td {
    padding: 0 3px;
    text-align: right;
    font-weight: normal;
    white-space: nowrap;
}
.orders th {
    height: 24px;
    padding: 0 4px;
    border-right: 1px solid #dfe3e8;
    border-bottom: 1px solid #c8c8c8;
    background: linear-gradient(#fff 0, #fff 45%, #f3f5f8 50%, #f3f5f8 100%);
}
.orders th:last-child {
    padding-right: 6px;
    border-right: 0;
}
.orders td {
    height: 20px;
    border-right: 1px solid #c8c8c8;
    font-size: 11px;
}
.orders td:last-child {
    border-right: 0;
}
.orders .first {
    padding-left: 6px;
    text-align: left;
}
.orders td.first {
    padding-left: 2px;
}
.sort {
    display: inline-block;
    margin-left: 8px;
}
.row-icon {
    display: inline-block;
    margin-right: 4px;
    vertical-align: middle;
}
.orders .profit {
    padding-right: 24px;
    position: relative;
}
.close-order {
    position: absolute;
    top: 7px;
    right: 7px;
}
.orders .balance td {
    border: 0;
    background: #c8c8c8;
    font-size: 12px;
    font-weight: 600;
}
.terminal-tabs {
    padding-left: 2px;
}

/* status bar */
.statusbar {
    display: grid;
    grid-template-columns: 331px 116px 102px 71px 71px 68px 70px 66px 1fr;
    align-items: center;
    height: 24px;
    border-top: 1px solid #a0a0a0;
    background: #f0f0f0;
}
.statusbar span {
    height: 18px;
    padding-left: 5px;
    border-right: 1px solid #a0a0a0;
    line-height: 18px;
}
.statusbar .help {
    padding-left: 2px;
}
.statusbar .traffic {
    display: flex;
    gap: 3px;
    align-items: center;
    border: 0;
}

/* taskbar */
.taskbar {
    display: flex;
    align-items: center;
    height: 40px;
    border-top: 1px solid #1a1410;
    background: linear-gradient(to right, #2a1c1e 0, #3a2a24 60px, #35281c 200px, #42331f 300px, #574629 480px, #3f3014 600px, #54421f 680px, #3c2e14 820px, #2c2013 100%);
    color: #fff;
}
.start {
    width: 38px;
    margin: 0 14px 0 8px;
}
.task {
    display: flex;
    width: 58px;
    height: 38px;
    margin-right: 4px;
    align-items: center;
    justify-content: center;
    border: 1px solid #a09a92;
    border-radius: 2px;
    background: linear-gradient(135deg, #8f8780 0, #6b6157 50%, #51463b 55%, #6b5e50 100%);
}
.task.open {
    border-color: #e8e6e2;
    background: linear-gradient(135deg, #d5d3d0 0, #a8a49e 50%, #8a857e 55%, #a8a196 100%);
}
.tray {
    display: flex;
    align-items: center;
    margin-left: auto;
    gap: 9px;
}
.lang {
    margin: 0 7px 4px 0;
}
.clock {
    display: flex;
    flex-direction: column;
    margin-left: 10px;
    font-size: 11px;
    text-align: center;
}
.show-desktop {
    width: 14px;
    height: 38px;
    margin: 0 1px 0 2px;
    border: 1px solid #8a8278;
    background: linear-gradient(#7a7268 0, #4a4038 50%, #2a221a 55%);
}
```
